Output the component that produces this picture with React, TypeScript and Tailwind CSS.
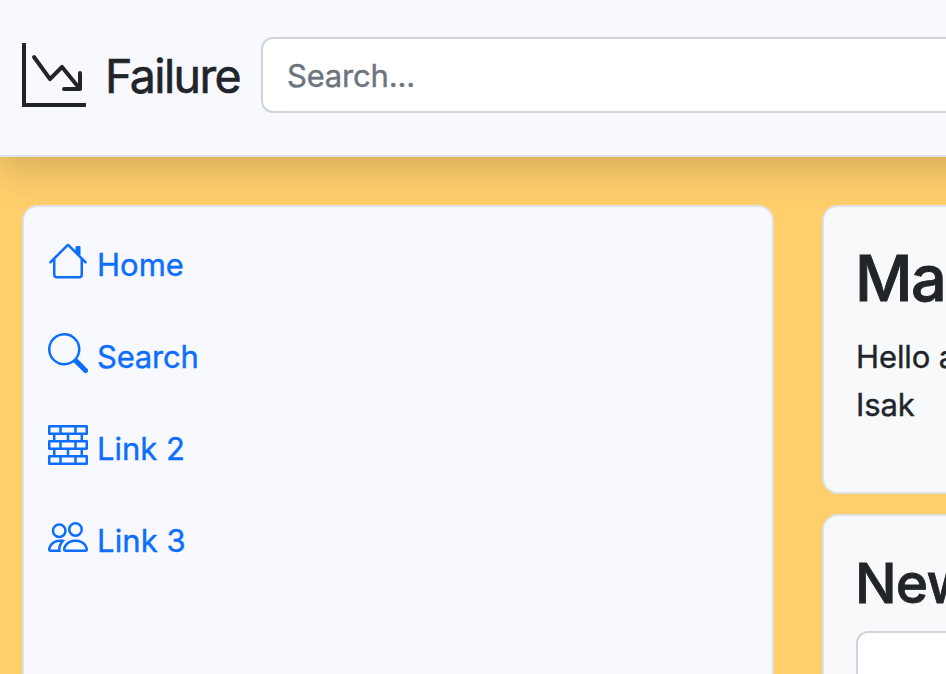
import React from "react";
import { BsBricks, BsGraphDownArrow, BsHouse, BsPeople, BsSearch } from "react-icons/bs";

const links = [
  { label: "Home", Icon: BsHouse, tracking: "tracking-[0px]" },
  { label: "Search", Icon: BsSearch, tracking: "tracking-[-0.2px]" },
  { label: "Link 2", Icon: BsBricks, tracking: "tracking-[0px]" },
  { label: "Link 3", Icon: BsPeople, tracking: "tracking-[0.1px]" },
];

export default function App() {
  return (
    <div className="flex h-[674px] w-[946px] flex-col overflow-hidden bg-[#ffcf6c] font-['Inter',sans-serif] text-[#212529] [-webkit-text-stroke:0.4px_currentColor]">
      <header className="flex h-[157px] w-[1400px] shrink-0 items-start border-b-2 border-[#dee2e6] bg-[#f8f9ff] pl-[22px] shadow-[0_16px_32px_rgba(0,0,0,0.15)]">
        <BsGraphDownArrow className="mt-[43px] size-16 shrink-0" />
        <span className="mt-[40px] ml-[19px] w-[156px] shrink-0 text-[46.5px] leading-[72px] tracking-[-1.6px] whitespace-nowrap [-webkit-text-stroke:0.6px_currentColor]">
          Failure
        </span>
        <input
          className="mt-[37px] h-[76px] grow rounded-xl border-2 border-[#ced4da] bg-white px-6 text-[31px] tracking-[-0.2px] outline-none placeholder:text-[#6c757d]"
          placeholder="Search..."
        />
      </header>
      <div className="flex w-[1600px] items-start gap-12 pt-12 pl-[22px]">
        <nav className="flex h-[700px] w-[752px] shrink-0 flex-col gap-11 rounded-2xl border-2 border-[#dee2e6] bg-[#f8f9ff] pt-[34px] pl-6">
          {links.map(({ label, Icon, tracking }) => (
            <a key={label} className="flex h-12 shrink-0 items-start text-[#0d6efd]">
              <Icon className="size-10 shrink-0" />
              <span className={`ml-[9px] text-[31px] leading-[48px] whitespace-nowrap ${tracking}`}>{label}</span>
            </a>
          ))}
        </nav>
        <main className="flex w-[752px] shrink-0 flex-col gap-5">
          <section className="h-[289px] rounded-2xl border-2 border-[#dee2e6] bg-[#f8f9fa] px-8 pt-[33px]">
            <h1 className="-ml-px text-[63px] leading-[77px] font-medium tracking-[-1.4px] [-webkit-text-stroke:0.9px_currentColor]">Main</h1>
            <p className="mt-4 text-[31px] leading-[48px] tracking-[-0.1px]">
              Hello and welcome
              <br />
              Isak
            </p>
          </section>
          <section className="h-[300px] rounded-2xl border-2 border-[#dee2e6] bg-[#f8f9fa] px-8 pt-[34px]">
            <h2 className="-ml-px text-[55px] leading-[67px] font-medium tracking-[-0.8px] [-webkit-text-stroke:0.8px_currentColor]">News</h2>
            <div className="mt-[14px] h-40 rounded-xl border-2 border-[#ced4da] bg-white" />
          </section>
        </main>
      </div>
    </div>
  );
}
